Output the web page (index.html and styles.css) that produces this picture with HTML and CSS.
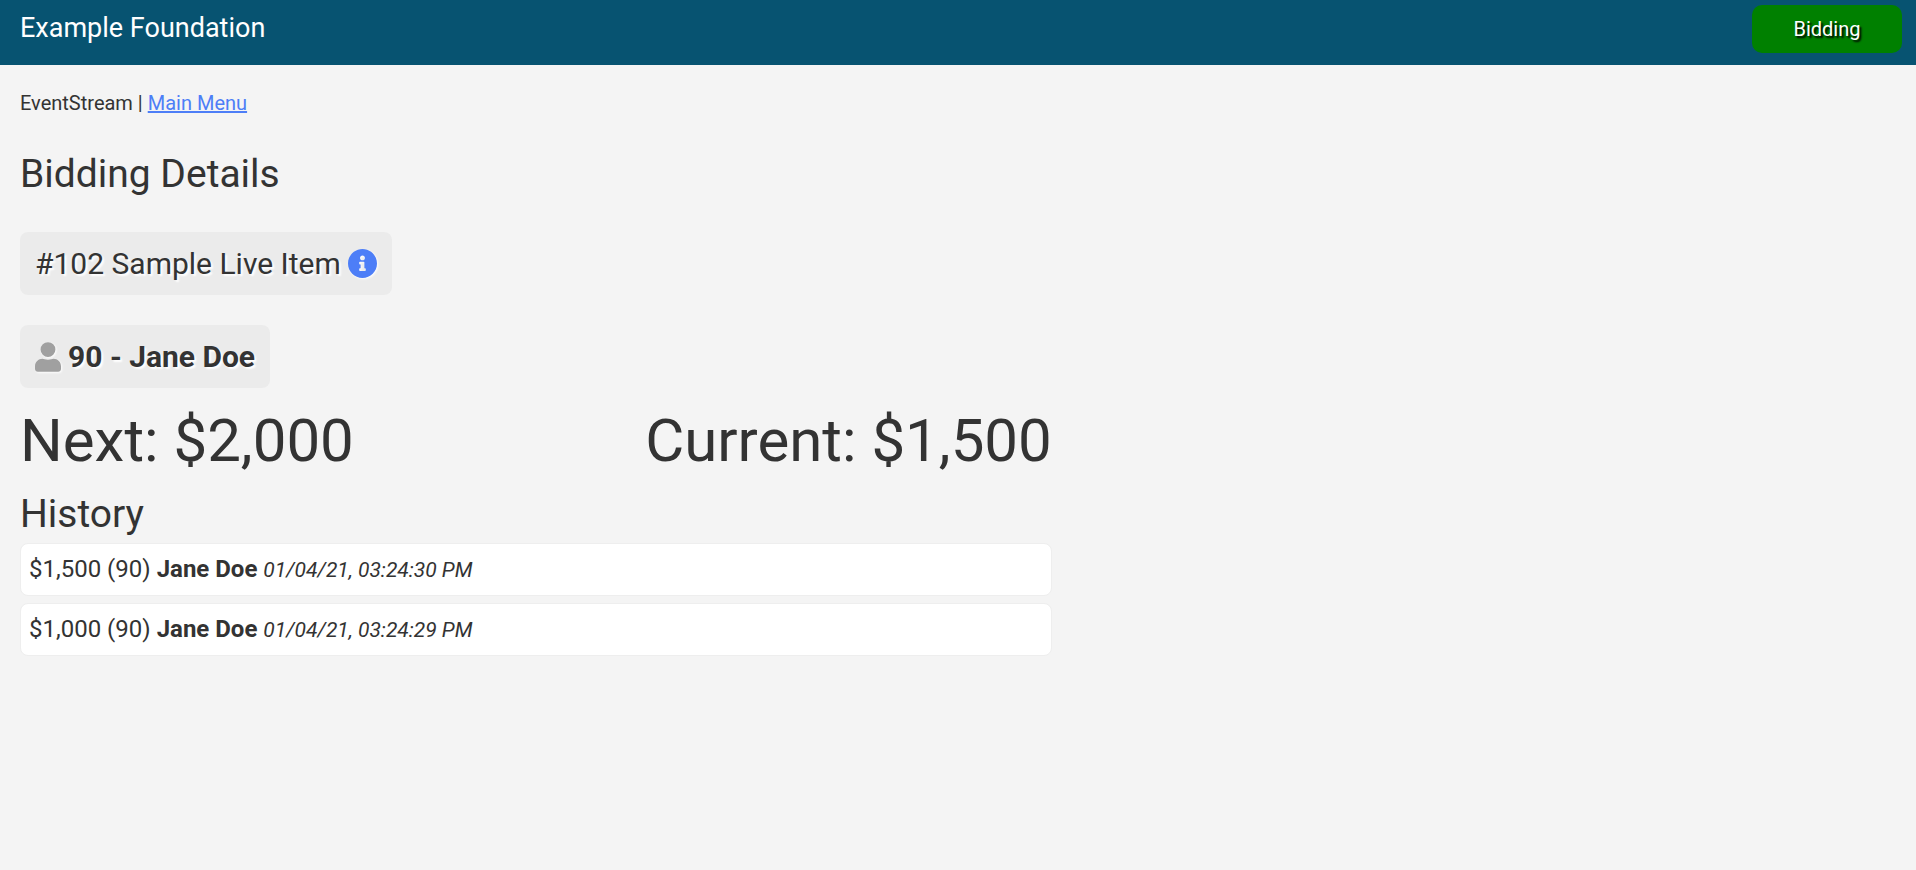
FILE: index.html
```html
<!DOCTYPE html>
<html lang="en">
<head>
<meta charset="utf-8">
<meta name="viewport" content="width=device-width, initial-scale=1">
<title>Bidding Details</title>
<link rel="stylesheet" href="styles.css">
</head>
<body>
<header class="topbar">
  <div class="org">Example Foundation</div>
  <button type="button" class="status">Bidding</button>
</header>
<main class="content">
  <nav class="crumbs">EventStream | <a href="#">Main Menu</a></nav>
  <h1>Bidding Details</h1>

  <div class="tag">
    <span>#102 Sample Live Item</span>
    <a class="info" href="#" aria-label="Item info">
      <svg class="icon-info" viewBox="8 8 496 496"><path fill="currentColor" d="M256 8C119.043 8 8 119.083 8 256c0 136.997 111.043 248 248 248s248-111.003 248-248C504 119.083 392.957 8 256 8zm0 110c23.196 0 42 18.804 42 42s-18.804 42-42 42-42-18.804-42-42 18.804-42 42-42zm56 254c0 6.627-5.373 12-12 12h-88c-6.627 0-12-5.373-12-12v-24c0-6.627 5.373-12 12-12h12v-64h-12c-6.627 0-12-5.373-12-12v-24c0-6.627 5.373-12 12-12h64c6.627 0 12 5.373 12 12v100h12c6.627 0 12 5.373 12 12v24z"/></svg>
    </a>
  </div>

  <div class="tag bidder">
    <svg class="icon-user" viewBox="0 0 448 512"><path fill="currentColor" d="M224 256a128 128 0 1 0 0-256 128 128 0 0 0 0 256zm96 32c-27 0-48 16-96 16s-69-16-96-16C57 288 0 345 0 416v48c0 26.500 21.500 48 48 48h352c26.500 0 48-21.500 48-48v-48c0-71-57-128-128-128z"/></svg>
    <span>90 - Jane Doe</span>
  </div>

  <section class="bids">
    <div class="amounts">
      <div>Next: $2,000</div>
      <div>Current: $1,500</div>
    </div>
    <h2>History</h2>
    <ul class="history">
      <li>$1,500 (90) <b>Jane Doe</b> <i>01/04/21, 03:24:30 PM</i></li>
      <li>$1,000 (90) <b>Jane Doe</b> <i>01/04/21, 03:24:29 PM</i></li>
    </ul>
  </section>
</main>
</body>
</html>
```
FILE: styles.css
```css
* { box-sizing: border-box; }
body {
  margin: 0;
  background: #f4f4f4;
  color: #333;
  font: 20px/30px Roboto, "Liberation Sans", sans-serif;
}
a { color: #4d7ef7; }
h1, h2 { margin: 0; font-size: 39px; font-weight: 400; line-height: 48px; }

/* top bar */
.topbar {
  display: flex;
  justify-content: space-between;
  align-items: flex-start;
  height: 65px;
  padding: 5px 14px 0 20px;
  background: #075371;
  color: #fff;
}
.org { font-size: 27px; line-height: 46px; }
.status {
  width: 150px;
  height: 48px;
  border: 0;
  border-radius: 10px;
  background: green;
  color: #fff;
  font: inherit;
  text-shadow: 2px 2px 2px #000;
}

.content { padding: 23px 20px; }
.crumbs { margin-bottom: 32px; }
h1 { margin-bottom: 34px; }

/* item and bidder labels */
.tag {
  display: flex;
  align-items: center;
  gap: 7px;
  width: fit-content;
  height: 63px;
  margin-bottom: 30px;
  padding: 0 15px;
  border-radius: 8px;
  background: #ebebeb;
  font-size: 30px;
  text-shadow: 2px 2px 2px #fff;
}
.tag svg { display: block; filter: drop-shadow(1px 1px 1px #fff); }
.bidder { margin-bottom: 17px; font-weight: 700; }
.icon-info { width: 29px; height: 29px; }
.icon-user { width: 26px; height: 30px; color: #a0a0a0; }

/* bids */
.bids { width: 55%; }
.amounts {
  display: flex;
  justify-content: space-between;
  font-size: 60px;
  line-height: 72px;
  margin-bottom: 13px;
}
.history { margin: 5px 0 0; padding: 0; list-style: none; }
.history li {
  margin-bottom: 7px;
  padding: 7px 8px 8px;
  border: 1px solid #eee;
  border-radius: 8px;
  background: #fff;
  font-size: 24px;
  line-height: 36px;
}
.history i { font-size: 21px; line-height: 24px; }
```
